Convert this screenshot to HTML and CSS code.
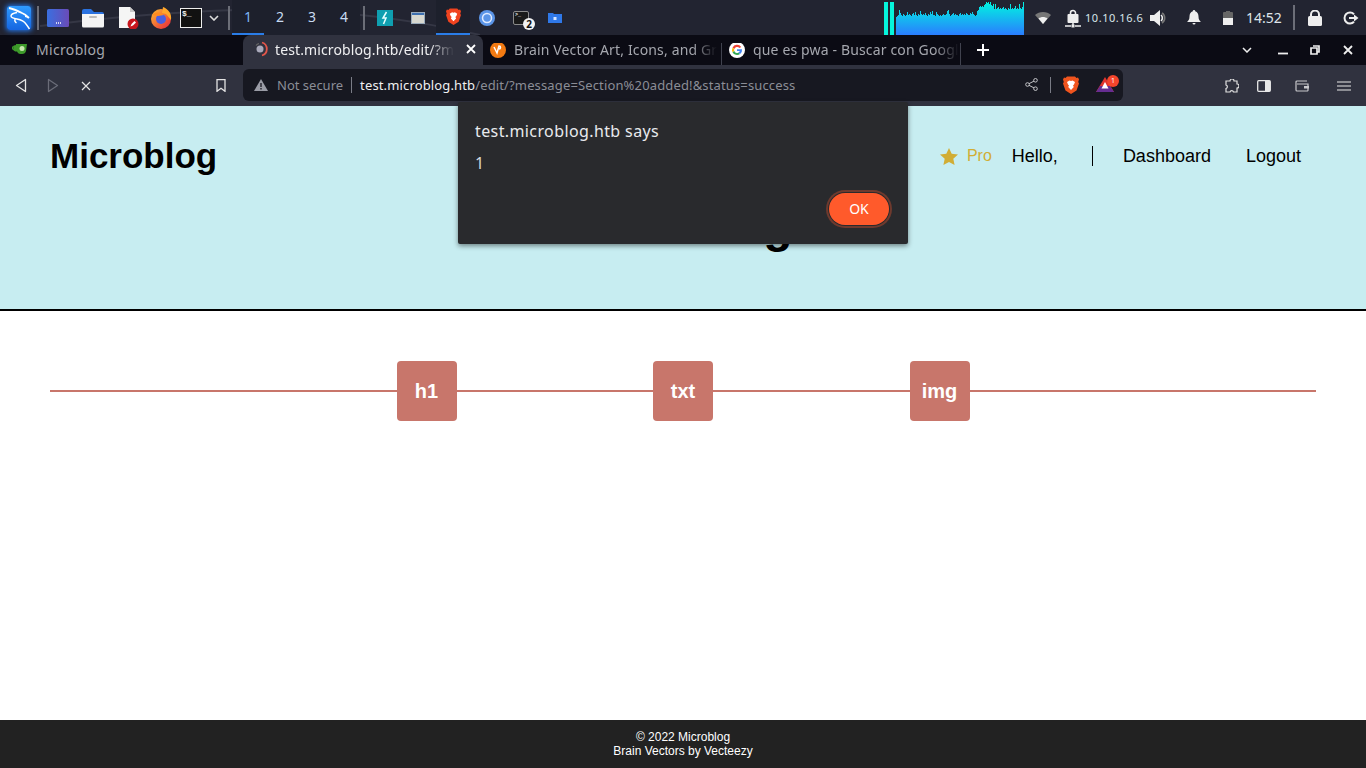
FILE: index.html
```html
<!DOCTYPE html>
<html lang="en">
<head>
<meta charset="utf-8">
<title>Microblog</title>
<link rel="stylesheet" href="styles.css">
</head>
<body>
<div class="taskbar">
  <div class="slot w-kali"><span class="kali"><svg viewBox="0 0 24 24" width="24" height="24"><defs><linearGradient id="kb" x1="0" y1="0" x2="0" y2="1"><stop offset="0" stop-color="#2f9bff"/><stop offset="1" stop-color="#1565e0"/></linearGradient></defs><rect x="0" y="0" width="24" height="24" rx="3" fill="url(#kb)"/><path d="M2 2c5 1 9 3 13 5 3 1 5 3 7 5M22 12c-1-1-3-2-4-2" fill="none" stroke="#fff" stroke-width="1.800"/><path d="M10 6.500C7 7 4 8.500 4 10c0 2 3 2.500 6 3 4 .8 7 2 9 5 1.500 2 2.500 3.500 3.500 5M8 13c-.5 1.500 0 3 1.500 4" fill="none" stroke="#fff" stroke-width="1.400"/></svg></span></div>
  <div class="sep sep-a"></div>
  <div class="slot w-app"><svg viewBox="0 0 22 18" width="22" height="18"><defs><linearGradient id="am" x1="0" y1="0" x2="1" y2="0"><stop offset="0" stop-color="#3a6fe0"/><stop offset="1" stop-color="#6a4bb8"/></linearGradient></defs><rect width="22" height="18" rx="1.500" fill="url(#am)"/><path d="M9 14h1M11 14h1M13 14h1" stroke="#fff" stroke-width="1.400"/></svg></div>
  <div class="slot w-folder"><svg viewBox="0 0 22 20" width="22" height="20"><path d="M0 3a2 2 0 0 1 2-2h7l3 3h8a2 2 0 0 1 2 2v3H0z" fill="#2a72e0"/><path d="M0 6h22v12a1.500 1.500 0 0 1-1.500 1.500h-19A1.500 1.500 0 0 1 0 18z" fill="#f4f4f4"/><rect x="7" y="8" width="8" height="2" rx="1" fill="#bcbcbc"/></svg></div>
  <div class="slot w-file"><svg viewBox="0 0 22 22" width="22" height="22"><path d="M2 0h11l5 5v16H2z" fill="#f5f5f5"/><path d="M13 0l5 5h-5z" fill="#c8c8c8"/><circle cx="16" cy="17" r="5.500" fill="#c8161d"/><path d="M13.500 19.500l1-2.500 3-3 1.500 1.500-3 3z" fill="#fff"/></svg></div>
  <div class="slot w-fox"><svg viewBox="0 0 22 22" width="22" height="22"><defs><linearGradient id="ff" x1="0" y1="0" x2="1" y2="1"><stop offset="0" stop-color="#ffbd2e"/><stop offset="1" stop-color="#e5233e"/></linearGradient></defs><circle cx="11" cy="12" r="10" fill="url(#ff)"/><path d="M13 0c5 2 9 6 8 13l-5-6-4-1z" fill="#ffa72a"/><circle cx="11" cy="12" r="5" fill="#4a5fe0"/><path d="M2 8c3-3 6-3 9-2l3 2-6 1z" fill="#ff8a1e"/></svg></div>
  <div class="slot w-term"><span class="termbox">$_</span></div>
  <div class="slot w-chev"><svg viewBox="0 0 10 6" width="10" height="6"><path d="M1 1l4 4 4-4" fill="none" stroke="#ddd" stroke-width="1.600"/></svg></div>
  <div class="sep sep-b"></div>
  <div class="ws ws-on">1</div>
  <div class="ws">2</div>
  <div class="ws">3</div>
  <div class="ws">4</div>
  <div class="sep sep-c"></div>
  <div class="slot w-task"><svg viewBox="0 0 16 16" width="16" height="16"><rect width="16" height="16" fill="#0f9fb0"/><path d="M9.500 2L6 8h3l-2.500 6M9 8" fill="none" stroke="#e8ffff" stroke-width="1.500"/></svg></div>
  <div class="slot w-task2"><svg viewBox="0 0 14 12" width="14" height="12"><rect x=".5" y=".5" width="13" height="11" fill="#d8d8d0" stroke="#9ab"/><rect x="1" y="1" width="12" height="2" fill="#3d6fb0"/></svg></div>
  <div class="slot w-task3 active-task"><svg viewBox="0 0 16 18" width="15" height="17"><path d="M4 .5h8l1.500 1.500 1.500-.5 1 2-.8 2.500.8 1.500-2.500 7L8 18l-5.500-3.500-2.500-7 .8-1.500L0 3.500l1-2 1.500.5z" fill="#f0431f"/><path d="M4 6l2.500-1.500L8 5l1.500-.5L12 6l-1 2.500-1 1 .8 1.500L8 14l-2.800-3 .8-1.500-1-1z" fill="#fff"/></svg></div>
  <div class="slot w-task3"><svg viewBox="0 0 16 16" width="16" height="16"><circle cx="8" cy="8" r="8" fill="#5b95e8"/><circle cx="8" cy="8" r="4.500" fill="none" stroke="#dfeaff" stroke-width="1.500"/></svg></div>
  <div class="slot w-task3 term-task"><span class="termmini">&gt;_</span><span class="badge-two">2</span></div>
  <div class="slot w-task3"><svg viewBox="0 0 14 11" width="14" height="11"><path d="M0 1h5l1 1h8v9H0z" fill="#2f78e8"/><rect x="5.500" y="5" width="3" height="3" fill="#d8e6ff"/></svg></div>
  <div class="spacer"></div>
  <div class="bars"><span class="bar"></span><span class="bar"></span></div>
  <svg class="graph" viewBox="0 0 128 34" width="128" height="34"><defs><linearGradient id="gr" x1="0" y1="0" x2="0" y2="1"><stop offset="0" stop-color="#00f5e0"/><stop offset="1" stop-color="#2a7dff"/></linearGradient></defs><path fill="url(#gr)" d="M0 34V16h1V15h1V14h1V9h1V12h1V14h1V15h1V13h1V14h1V15h1V14h1V11h1V14h1V13h1V14h1V15h1V13h1V12h1V14h1V11h1V14h1V15h1V13h1V14h1V10h1V13h1V14h1V13h1V14h1V12h1V14h1V15h1V13h1V14h1V11h1V13h1V10h1V14h2V15h1V11h1V13h1V14h1V15h1V14h1V15h1V14h1V13h1V14h2V13h1V10h1V9h1V13h1V15h1V14h1V13h1V12h1V14h1V13h1V14h2V15h1V13h1V12h1V14h1V13h1V14h1V13h1V14h1V12h1V13h1V14h2V12h1V13h1V11h1V13h1V14h1V15h1V14h1V10h1V9h1V6h1V5h1V6h1V5h1V6h1V4h1V3h1V1h1V2h1V1h1V3h1V1h1V4h1V5h1V3h1V8h1V3h1V8h1V7h1V6h1V8h1V7h1V8h1V7h1V6h1V8h1V7h1V8h1V9h1V7h1V8h1V3h1V8h1V7h1V8h1V7h1V5h1V8h1V7h1V8h1V3h1V7h1V8h1V6h1V1h1V34z"/></svg>
  <div class="slot w-wifi"><svg viewBox="0 0 16 12" width="16" height="12"><path d="M0 3c4-4 12-4 16 0l-8 9z" fill="#777"/><path d="M3.500 6.500c2.500-2 6.500-2 9 0L8 12z" fill="#f0f0f0"/></svg></div>
  <div class="slot w-vpn"><svg viewBox="0 0 16 20" width="16" height="20"><rect x="2.500" y="6" width="11" height="9" rx="1" fill="#eee"/><path d="M5.500 6.500V5a2.500 2.500 0 0 1 5 0v1.500" fill="none" stroke="#eee" stroke-width="1.600"/><path d="M0 18h6M10 18h6M8 15v2" stroke="#eee" stroke-width="1.500"/><rect x="6.500" y="16.500" width="3" height="3" fill="#eee"/></svg></div>
  <div class="ip">10.10.16.6</div>
  <div class="slot w-snd"><svg viewBox="0 0 18 16" width="18" height="16"><path d="M0 5h4l6-5v16l-6-5H0z" fill="#eee"/><path d="M12 3a6 6 0 0 1 0 10" fill="none" stroke="#777" stroke-width="1.600"/><path d="M11 5a4 4 0 0 1 0 6" fill="none" stroke="#eee" stroke-width="1.600"/></svg></div>
  <div class="slot w-bell"><svg viewBox="0 0 14 15" width="14" height="15"><path d="M7 0a1.200 1.200 0 0 1 1.200 1.300C10.500 2 11.500 4 11.500 6.500c0 3 1 4 2.500 5.500H0c1.500-1.500 2.500-2.500 2.500-5.500C2.500 4 3.500 2 5.800 1.300A1.200 1.200 0 0 1 7 0zM5.500 13h3a1.500 1.500 0 0 1-3 0z" fill="#eee"/></svg></div>
  <div class="slot w-batt"><svg viewBox="0 0 10 14" width="10" height="14"><rect y="1" width="10" height="13" rx="1" fill="#666"/><rect y="7" width="10" height="7" fill="#eee"/><rect x="3" width="4" height="2" fill="#666"/></svg></div>
  <div class="clock">14:52</div>
  <div class="sep sep-d"></div>
  <div class="slot w-lock"><svg viewBox="0 0 14 16" width="14" height="16"><rect y="6" width="14" height="10" rx="1.500" fill="#eee"/><path d="M3 7V4.500a4 4 0 0 1 8 0V7" fill="none" stroke="#eee" stroke-width="2"/></svg></div>
  <div class="slot w-out"><svg viewBox="0 0 16 14" width="16" height="14"><path d="M11 3.200A5.500 5.500 0 1 0 11 10.800" fill="none" stroke="#eee" stroke-width="2"/><path d="M6 7h6" stroke="#eee" stroke-width="2"/><path d="M11 3.500L15.500 7 11 10.500z" fill="#eee"/></svg></div>
</div>

<div class="tabstrip">
  <div class="tab tab-first">
    <svg class="favicon" viewBox="0 0 16 12" width="16" height="12"><path d="M4 1h11l-1 7a4 4 0 0 1-4 3H8A4 4 0 0 1 5 8.500 3.200 3.200 0 0 1 4 2z" fill="#3d9a2a"/><circle cx="2.500" cy="5" r="2" fill="none" stroke="#3d9a2a" stroke-width="1.200"/><circle cx="10" cy="5.500" r="2.500" fill="#c8e8b0"/></svg>
    <span class="tab-label">Microblog</span>
  </div>
  <div class="tab tab-active">
    <svg class="spin" viewBox="0 0 16 16" width="16" height="16"><circle cx="7" cy="8" r="3.500" fill="#aab"/><path d="M9 1.500a6.800 6.800 0 0 1 0 13" fill="none" stroke="#e2564a" stroke-width="1.800"/><path d="M3 4.500a5.500 5.500 0 0 1 3-2" fill="none" stroke="#666" stroke-width="1.200"/></svg>
    <span class="tab-label fade">test.microblog.htb/edit/?m</span>
    <svg class="tab-x" viewBox="0 0 10 10" width="10" height="10"><path d="M1 1l8 8M9 1l-8 8" stroke="#fff" stroke-width="1.800"/></svg>
  </div>
  <div class="tab tab-plain">
    <svg class="fav-b" viewBox="0 0 16 16" width="16" height="16"><circle cx="8" cy="8" r="8" fill="#f27a12"/><path d="M4 5l3 6 2-7c2 0 2 3 0 3" fill="none" stroke="#fff" stroke-width="1.500"/></svg>
    <span class="tab-label fade-dim">Brain Vector Art, Icons, and Gr</span>
  </div>
  <div class="tab tab-plain">
    <svg class="fav-g" viewBox="0 0 16 16" width="16" height="16"><circle cx="8" cy="8" r="8" fill="#fff"/><path d="M12.200 5A5 5 0 0 0 3.500 5.800L5.300 7A3 3 0 0 1 10.400 6z" fill="#ea4335"/><path d="M3.500 5.800a5 5 0 0 0 0 4.400L5.300 9a3 3 0 0 1 0-2z" fill="#fbbc05"/><path d="M3.500 10.200a5 5 0 0 0 7.600 1.700L9.500 10.500A3 3 0 0 1 5.300 9z" fill="#34a853"/><path d="M13 7.200H8v1.900h2.900a2.500 2.500 0 0 1-1.400 1.400l1.600 1.400A5 5 0 0 0 13 7.200z" fill="#4285f4"/></svg>
    <span class="tab-label fade-dim">que es pwa - Buscar con Googl</span>
  </div>
  <svg class="newtab" viewBox="0 0 12 12" width="12" height="12"><path d="M6 0v12M0 6h12" stroke="#fff" stroke-width="2"/></svg>
  <div class="spacer"></div>
  <svg class="win win-chev" viewBox="0 0 10 6" width="10" height="6"><path d="M1 1l4 4 4-4" fill="none" stroke="#eee" stroke-width="1.500"/></svg>
  <svg class="win win-min" viewBox="0 0 10 10" width="10" height="10"><path d="M0 8.500h10" stroke="#eee" stroke-width="1.800"/></svg>
  <svg class="win win-max" viewBox="0 0 10 10" width="10" height="10"><path d="M3 1h6v6H7M1 3h6v6H1z" fill="none" stroke="#eee" stroke-width="1.700"/></svg>
  <svg class="win win-close" viewBox="0 0 10 10" width="10" height="10"><path d="M1 1l8 8M9 1l-8 8" stroke="#eee" stroke-width="1.800"/></svg>
</div>

<div class="toolbar">
  <svg class="tb tb-back" viewBox="0 0 12 15" width="12" height="15"><path d="M10.500 1.500v12L1.500 7.500z" fill="none" stroke="#e4e4e4" stroke-width="1.300" stroke-linejoin="round"/></svg>
  <svg class="tb tb-fwd" viewBox="0 0 12 15" width="12" height="15"><path d="M1.500 1.500v12l9-6z" fill="none" stroke="#6a6c78" stroke-width="1.300" stroke-linejoin="round"/></svg>
  <svg class="tb tb-stop" viewBox="0 0 10 10" width="10" height="10"><path d="M1 1l8 8M9 1l-8 8" stroke="#e4e4e4" stroke-width="1.200"/></svg>
  <svg class="tb tb-mark" viewBox="0 0 10 13" width="10" height="13"><path d="M1 .7h8v11.600L5 9.300 1 12.300z" fill="none" stroke="#e4e4e4" stroke-width="1.300"/></svg>
  <div class="urlbar">
    <svg class="warn" viewBox="0 0 14 12" width="14" height="12"><path d="M7 0l7 12H0z" fill="#9a9ca6"/><path d="M7 4v4M7 9v1.500" stroke="#171821" stroke-width="1.300"/></svg>
    <span class="notsec">Not secure</span>
    <span class="urlsep"></span>
    <span class="url"><span class="host">test.microblog.htb</span>/edit/?message=Section%20added!&amp;status=success</span>
    <span class="spacer"></span>
    <svg class="share" viewBox="0 0 13 13" width="13" height="13"><circle cx="2.500" cy="6.500" r="1.800" fill="none" stroke="#c4c4c8"/><circle cx="10.500" cy="2.300" r="1.800" fill="none" stroke="#c4c4c8"/><circle cx="10.500" cy="10.700" r="1.800" fill="none" stroke="#c4c4c8"/><path d="M4 5.700l5-2.600M4 7.300l5 2.600" stroke="#c4c4c8"/></svg>
    <span class="urlsep2"></span>
    <svg class="shield" viewBox="0 0 16 18" width="16" height="18"><path d="M4 .5h8l1.500 1.500 1.500-.5 1 2-.8 2.500.8 1.500-2.500 7L8 18l-5.500-3.500-2.500-7 .8-1.500L0 3.500l1-2 1.500.5z" fill="#f0541e"/><path d="M4 6l2.500-1.500L8 5l1.500-.5L12 6l-1 2.500-1 1 .8 1.500L8 14l-2.800-3 .8-1.500-1-1z" fill="#fff"/></svg>
    <span class="bat"><svg viewBox="0 0 18 15" width="18" height="15"><path d="M9 0l9 15H0z" fill="#e0342c"/><path d="M0 15l4-6h10l4 6z" fill="#662d91"/><path d="M9 5l3.500 6.500h-7z" fill="#fff"/></svg><span class="bat-badge">1</span></span>
  </div>
  <svg class="tb tb-ext" viewBox="0 0 14 14" width="14" height="14"><path d="M5 2a2 2 0 0 1 4 0h3v3a2 2 0 0 1 0 4v4H8.500a1.800 1.800 0 0 0-3.500 0H1V9.500a1.800 1.800 0 0 0 0-3.500V2z" fill="none" stroke="#e0e0e0" stroke-width="1.200"/></svg>
  <svg class="tb tb-side" viewBox="0 0 14 12" width="14" height="12"><rect x=".7" y=".7" width="12.600" height="10.600" rx="1" fill="none" stroke="#e8e8e8" stroke-width="1.300"/><rect x="8" y="1" width="5" height="10" fill="#e8e8e8"/></svg>
  <svg class="tb tb-wal" viewBox="0 0 14 12" width="14" height="12"><path d="M12 1H2a1 1 0 0 0-1 1v8a1 1 0 0 0 1 1h10.500a.7.7 0 0 0 .5-.7V4H2" fill="none" stroke="#c8c8cc" stroke-width="1.200"/><rect x="9" y="6" width="5" height="2.500" fill="#c8c8cc"/></svg>
  <svg class="tb tb-menu" viewBox="0 0 14 10" width="14" height="10"><path d="M0 1h14M0 5h14M0 9h14" stroke="#e8e8e8" stroke-width="1.200"/></svg>
</div>

<div class="page">
  <header class="site-head">
    <div class="topline">
      <div class="logo">Microblog</div>
      <nav class="nav">
        <svg class="star" viewBox="0 0 18 17" width="18" height="17"><path d="M9 0l2.700 5.800 6.300.7-4.700 4.300 1.300 6.200L9 14l-5.600 3 1.300-6.200L0 6.500l6.300-.7z" fill="#d1ad35"/></svg>
        <span class="pro">Pro</span>
        <span class="hello">Hello,</span>
        <span class="navline"></span>
        <a class="navlink nl-dash">Dashboard</a>
        <a class="navlink nl-out">Logout</a>
      </nav>
    </div>
    <h1 class="hero">Microblog</h1>
  </header>
  <main class="content">
    <div class="blocks">
      <div class="block">h1</div>
      <div class="block">txt</div>
      <div class="block">img</div>
    </div>
  </main>
  <footer class="foot">
    <div>© 2022 Microblog</div>
    <div>Brain Vectors by Vecteezy</div>
  </footer>
</div>

<div class="dialog">
  <div class="dlg-title">test.microblog.htb says</div>
  <div class="dlg-msg">1</div>
  <div class="dlg-actions"><span class="ok">OK</span></div>
</div>
</body>
</html>
```
FILE: styles.css
```css
* { box-sizing: border-box; }
html, body { margin: 0; padding: 0; }
body {
  width: 1366px;
  height: 768px;
  overflow: hidden;
  position: relative;
  display: flex;
  flex-direction: column;
  background: #fff;
  font-family: "Noto Sans", sans-serif;
}
svg { display: block; flex: none; }
.spacer { flex: 1; }

/* taskbar */
.taskbar {
  height: 35px;
  flex: none;
  display: flex;
  align-items: center;
  padding-right: 7px;
  color: #e6e6e6;
  background-color: #222431;
  background-image: url("data:image/svg+xml,%3Csvg xmlns='http://www.w3.org/2000/svg' width='520' height='35'%3E%3Cpath d='M40 26C150 12 260 6 330 12S440 26 480 35' fill='none' stroke='%23353745' stroke-width='2'/%3E%3C/svg%3E");
  background-repeat: no-repeat;
}
.slot { height: 35px; display: flex; align-items: center; justify-content: center; flex: none; position: relative; }
.w-kali { width: 36px; }
.kali { display: block; width: 24px; height: 24px; box-shadow: 0 0 5px 1px #2277ee; border-radius: 3px; margin-left: 1px; }
.sep { width: 2px; height: 24px; background: #6c6e78; flex: none; }
.sep-a { margin-left: 1px; margin-right: 7px; }
.w-app { width: 24px; }
.w-folder { width: 36px; margin-left: 5px; }
.w-file { width: 34px; }
.w-fox { width: 32px; }
.w-term { width: 28px; }
.termbox {
  width: 22px; height: 20px; border: 1px solid #eee; background: #111;
  font: bold 8px/10px "Liberation Mono", monospace; color: #eee; padding-left: 1px;
}
.w-chev { width: 18px; margin-right: 5px; }
.sep-b { margin-right: 2px; }
.ws {
  width: 32px; height: 35px; flex: none; text-align: center;
  font-size: 14px; line-height: 33px; background: #1d202c; color: #c9dcf2;
}
.ws-on { border-bottom: 2px solid #2a7de8; color: #7fb6f5; }
.sep-c { margin-left: 3px; margin-right: 5px; }
.w-task { width: 30px; }
.w-task2 { width: 36px; }
.w-task3 { width: 34px; }
.active-task { background: #1d202c; border-bottom: 2px solid #2a7de8; }
.termmini {
  width: 16px; height: 14px; background: #1a1a1a; border: 1px solid #8a8a8a; border-radius: 2px;
  font: bold 5px/7px "Liberation Mono", monospace; color: #eee; padding-left: 1px;
}
.badge-two {
  position: absolute; left: 19px; top: 18px; width: 12px; height: 12px; border-radius: 50%;
  background: #f2f2f2; color: #111; font: bold 10px/12px "Noto Sans", sans-serif; text-align: center;
}
.bars { display: flex; gap: 2px; height: 34px; margin-right: 2px; padding-top: 1px; }
.bar { width: 4px; background: #06f5dc; }
.w-wifi { width: 38px; }
.w-vpn { width: 22px; }
.ip { font-size: 11px; letter-spacing: .55px; color: #d8e4ea; margin-left: 1px; width: 59px; white-space: nowrap; }
.w-snd { width: 18px; margin-left: 6px; }
.w-bell { width: 14px; margin-left: 19px; }
.w-batt { width: 10px; margin-left: 22px; }
.clock { font-size: 14px; margin-left: 13px; color: #dfe4ea; width: 35px; white-space: nowrap; }
.sep-d { margin-left: 12px; height: 25px; }
.w-lock { width: 14px; margin-left: 13px; }
.w-out { width: 16px; margin-left: 21px; }

/* tabs */
.tabstrip { height: 30px; flex: none; display: flex; align-items: center; background: #0b0b14; color: #a5a7ae; padding-bottom: 1px; }
.tab { height: 30px; display: flex; align-items: center; flex: none; font-size: 14px; position: relative; overflow: hidden; }
.tab-first { width: 243px; padding: 0 0 1px 12px; letter-spacing: .33px; }
.tab-first .favicon { margin-right: 8px; }
.tab-active { width: 240px; margin-bottom: -1px; padding: 0 7px 2px 10px; background: #30323f; border-radius: 8px 8px 0 0; color: #f0f0f2; letter-spacing: .12px; }
.spin { margin-right: 6px; }
.tab-label { white-space: nowrap; display: block; }
.fade { -webkit-mask-image: linear-gradient(90deg, #000 86%, transparent 100%); mask-image: linear-gradient(90deg, #000 86%, transparent 100%); }
.tab-x { margin-left: auto; }
.tab-plain { width: 239px; padding: 0 0 9px 7px; border-right: 1px solid #40424e; height: 22px; align-self: flex-end; margin-bottom: -1px; letter-spacing: .15px; }
.tab-plain .tab-label { margin-left: 8px; }
.fade-dim { -webkit-mask-image: linear-gradient(90deg, #000 88%, transparent 100%); mask-image: linear-gradient(90deg, #000 88%, transparent 100%); }
.newtab { margin-left: 16px; }
.win-chev { margin-right: 26px; }
.win-min { margin-right: 22px; }
.win-max { margin-right: 23px; }
.win-close { margin-right: 13px; }

/* toolbar */
.toolbar { height: 41px; flex: none; display: flex; align-items: center; background: #30323f; }
.tb-back { margin-left: 15px; }
.tb-fwd { margin-left: 20px; }
.tb-stop { margin-left: 22px; }
.tb-mark { margin-left: 125px; }
.urlbar {
  width: 880px; height: 32px; margin-left: 17px; margin-top: -2px; border-radius: 6px; background: #171821;
  display: flex; align-items: center; font-size: 13px; color: #8b8d96; padding-left: 11px;
}
.notsec { margin-left: 9px; }
.urlsep { width: 1px; height: 16px; background: #7a7c86; margin: 0 8px 0 8px; }
.url { white-space: nowrap; letter-spacing: .14px; }
.host { color: #f0f0f2; }
.share { margin-right: 12px; }
.urlsep2 { width: 1px; height: 16px; background: #7a7c86; margin-right: 12px; }
.shield { margin-right: 17px; }
.bat { position: relative; width: 18px; height: 15px; margin-right: 9px; display: block; }
.bat-badge {
  position: absolute; left: 11px; top: -2px; width: 12px; height: 12px; border-radius: 50%;
  background: #f4452c; color: #fff; font-size: 7px; line-height: 12px; text-align: center;
}
.tb-ext { margin-left: 102px; }
.tb-side { margin-left: 18px; }
.tb-wal { margin-left: 24px; }
.tb-menu { margin-left: 28px; }

/* page */
.page { flex: 1; display: flex; flex-direction: column; min-height: 0; font-family: "Liberation Sans", Arial, sans-serif; color: #000; }
.site-head { height: 205px; flex: none; background: #c7edf1; border-bottom: 2px solid #000; padding: 0 65px 0 50px; }
.topline { height: 92px; padding-top: 8px; display: flex; align-items: center; justify-content: space-between; }
.logo { font-size: 35px; font-weight: 700; }
.nav { display: flex; align-items: center; font-size: 18px; }
.pro { font-size: 16px; color: #d1ad35; margin-left: 9px; }
.hello { margin-left: 20px; }
.navline { width: 1px; height: 20px; background: #000; margin: 0 30px 0 34px; }
.nl-out { margin-left: 35px; }
.hero { margin: 0; font-size: 48px; line-height: 55px; font-weight: 700; text-align: center; padding-left: 5px; }
.content { flex: 1; padding: 50px 50px 0; }
.blocks {
  height: 60px; display: flex; justify-content: center; gap: 196.5px;
  background: linear-gradient(#c8766b, #c8766b) center / 100% 2px no-repeat;
}
.block {
  width: 60px; height: 60px; border-radius: 4px; background: #c8766b; color: #fff;
  font-size: 20px; font-weight: 700; display: flex; align-items: center; justify-content: center;
}
.foot {
  height: 48px; flex: none; background: #222; color: #fff; font-size: 12px; line-height: 14px;
  text-align: center; padding-top: 10px;
}

/* dialog */
.dialog {
  position: absolute; left: 458px; top: 102px; width: 450px; height: 142px; padding: 18px 17px;
  background: #292a2d; border-radius: 2px; box-shadow: 0 2px 5px rgba(0,0,0,.45); color: #e8eaed;
}
.dlg-title { font-size: 16px; line-height: 22px; letter-spacing: .39px; }
.dlg-msg { font-size: 16px; line-height: 20px; margin-top: 11px; color: #d8dade; }
.dlg-actions { display: flex; justify-content: flex-end; margin-top: 20px; padding-right: 2px; }
.ok {
  width: 60px; height: 32px; border-radius: 16px; background: #ff5a2b; color: #fff; font-size: 14px;
  line-height: 32px; text-align: center; box-shadow: 0 0 0 1px #292a2d, 0 0 0 3px #6e3a2e;
}
```
